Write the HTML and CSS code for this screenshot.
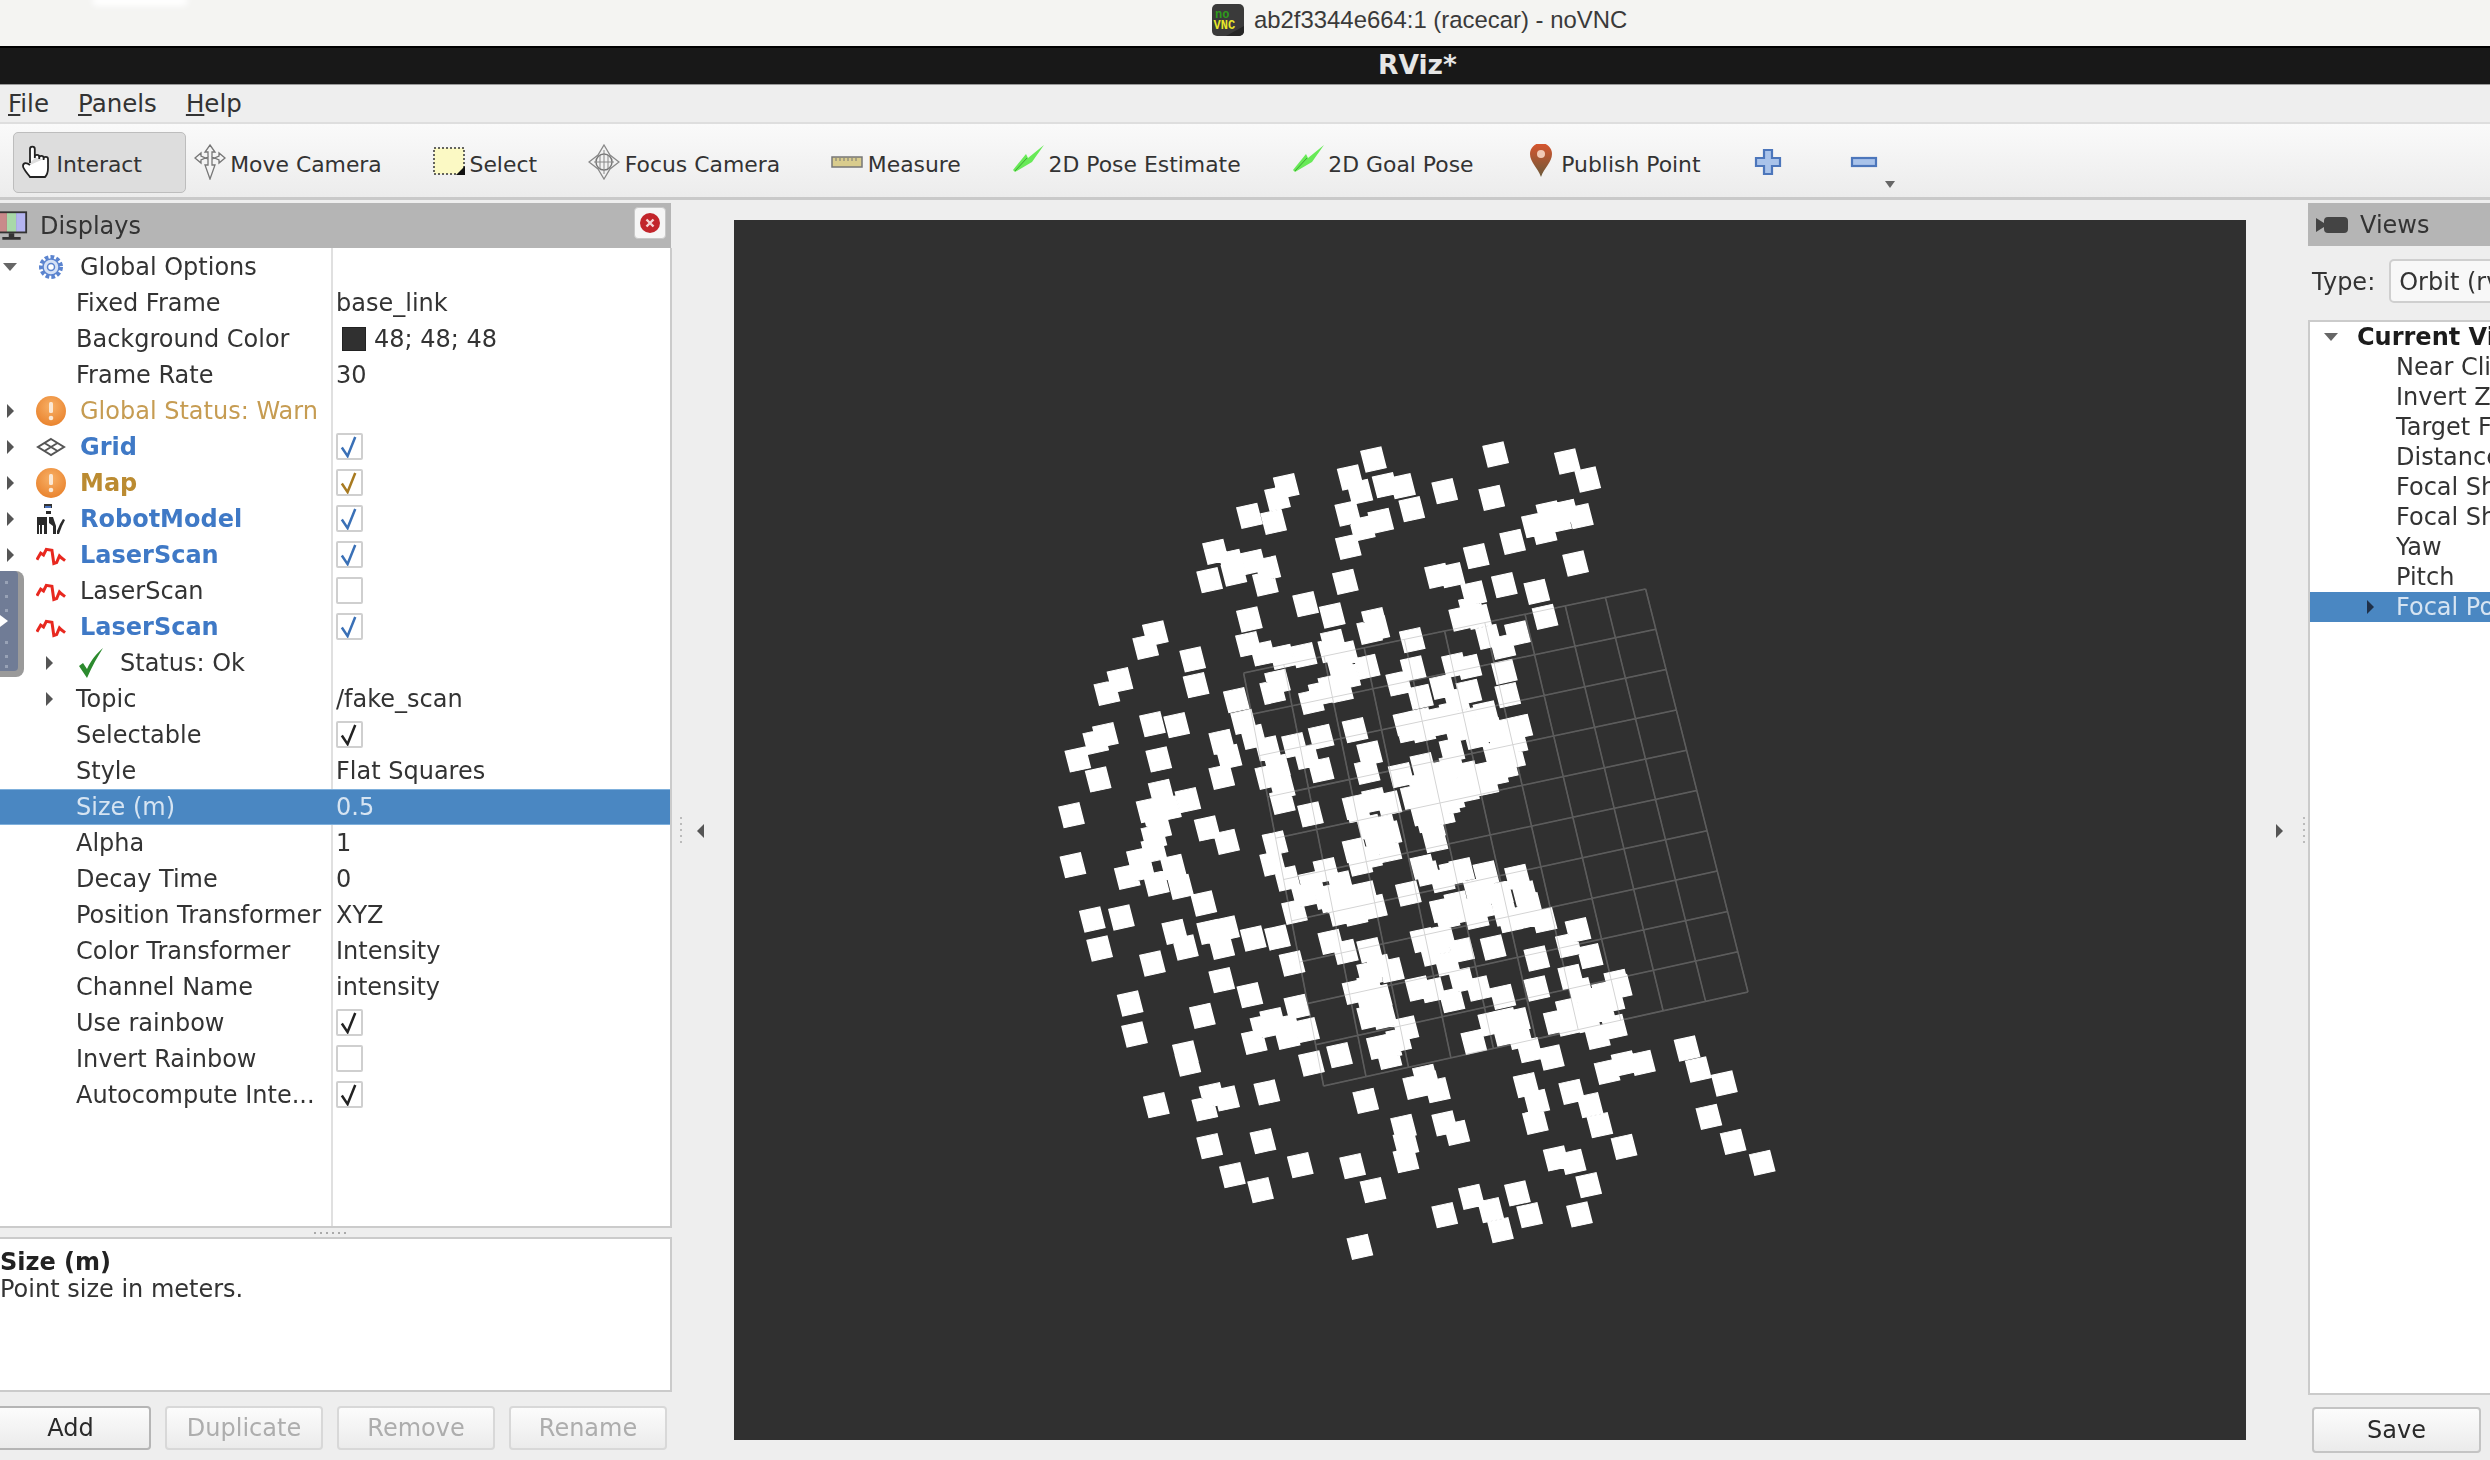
FILE: index.html
```html
<!DOCTYPE html>
<html lang="en">
<head>
<meta charset="utf-8">
<title>ab2f3344e664:1 (racecar) - noVNC</title>
<link rel="stylesheet" href="styles.css">
</head>
<body>
<div class="app">
  <header class="browserbar">
    <svg class="vncicon" viewBox="0 0 32 32"><rect width="32" height="32" rx="5" fill="#3a3a3a"/><path d="M32 22v5a5 5 0 0 1-5 5H14z" fill="#262626"/><text x="3" y="14" class="vnc-no">no</text><text x="1.5" y="25" class="vnc-vnc">VNC</text></svg>
    <span>ab2f3344e664:1 (racecar) - noVNC</span>
  </header>
  <div class="wintitle"><span>RViz*</span></div>
  <nav class="menubar">
    <span><u>F</u>ile</span><span><u>P</u>anels</span><span><u>H</u>elp</span>
  </nav>
  <div class="toolbar">
    <div class="tool pressed">
      <svg class="tic" viewBox="0 0 32 36"><path d="M10 19V5a2.4 2.4 0 0 1 4.800 0v9m0-1a2.200 2.200 0 0 1 4.400 0v2m0-1a2.200 2.200 0 0 1 4.400 0v2m0-1a2.200 2.200 0 0 1 4.400 0v9c0 4-1 7-3 9H10c-2-3-7-8-7-11 0-3 3-4 7-1" fill="#fff" stroke="#222" stroke-width="1.800"/></svg>
      <span>Interact</span>
    </div>
    <div class="tool">
      <svg class="tic" viewBox="0 0 32 36"><path d="M16 1l5 7h-3v7l7-3v-3l6 5-6 5v-3l-7-3v8h3l-5 14-5-14h3v-8l-7 3v3l-6-5 6-5v3l7 3V8h-3z" fill="#f4f4f4" stroke="#777" stroke-width="1.300"/></svg>
      <span>Move Camera</span>
    </div>
    <div class="tool">
      <svg class="tic" viewBox="0 0 32 36"><rect x="1" y="4" width="30" height="26" fill="#fbf9c4" stroke="#333" stroke-width="1.500" stroke-dasharray="2 2"/><path d="M32 22v9H23z" fill="#111"/></svg>
      <span>Select</span>
    </div>
    <div class="tool">
      <svg class="tic" viewBox="0 0 32 36"><path d="M16 1l6 10 9 7-9 7-6 10-6-10-9-7 9-7z" fill="#f2f2f2" stroke="#888" stroke-width="1.300"/><circle cx="16" cy="18" r="8" fill="none" stroke="#777" stroke-width="1.500"/><path d="M16 6v24M6 18h20M12 11v14M20 11v14" stroke="#888"/></svg>
      <span>Focus Camera</span>
    </div>
    <div class="tool">
      <svg class="tic" viewBox="0 0 32 36"><rect x="1" y="13" width="30" height="10" fill="#d9cc8d" stroke="#777" stroke-width="1.500"/><path d="M5 14v3M9 14v3M13 14v3M17 14v3M21 14v3M25 14v3" stroke="#777"/></svg>
      <span>Measure</span>
    </div>
    <div class="tool">
      <svg class="tic" viewBox="0 0 32 36"><path d="M32 1L20 18 3 28l-2-2 13-16 2 4z" fill="#68ea57"/><path d="M3 27l12-13" stroke="#3fa535" stroke-width="1"/></svg>
      <span>2D Pose Estimate</span>
    </div>
    <div class="tool">
      <svg class="tic" viewBox="0 0 32 36"><path d="M32 1L20 18 3 28l-2-2 13-16 2 4z" fill="#68ea57"/><path d="M3 27l12-13" stroke="#3fa535" stroke-width="1"/></svg>
      <span>2D Goal Pose</span>
    </div>
    <div class="tool">
      <svg class="tic" viewBox="0 0 32 36"><defs><linearGradient id="pin" x1="0" y1="0" x2="0" y2="1"><stop offset="0" stop-color="#d9552e"/><stop offset="1" stop-color="#6b5a3a"/></linearGradient></defs><path d="M16 33C13 24 5 18 5 10a11 11 0 0 1 22 0c0 8-8 14-11 23z" fill="url(#pin)"/><circle cx="16" cy="10" r="4" fill="#f1c9b5"/></svg>
      <span>Publish Point</span>
    </div>
    <div class="tool icononly">
      <svg class="tic" viewBox="0 0 32 36"><path d="M12 6h8v8h8v8h-8v8h-8v-8H4v-8h8z" fill="#a9c3ea" stroke="#4c76bb" stroke-width="2.200"/></svg>
    </div>
    <div class="tool icononly last">
      <svg class="tic" viewBox="0 0 32 36"><rect x="4" y="14" width="24" height="8" fill="#a9c3ea" stroke="#4c76bb" stroke-width="2.200"/></svg>
    </div>
    <i class="more"></i>
  </div>

  <main class="main">
    <section class="leftpanel">
      <div class="dockhead">
        <svg class="monitor" viewBox="0 0 36 34"><rect x="1" y="1" width="34" height="24" fill="#333"/><rect x="3" y="3" width="10" height="20" fill="#c98a8a"/><rect x="13" y="3" width="10" height="20" fill="#a8d8a8"/><rect x="23" y="3" width="10" height="20" fill="#b4b4f0"/><path d="M15 25h6v4h-6zM8 29h20v3H8z" fill="#333"/></svg>
        <span>Displays</span>
        <button class="closebtn"><svg viewBox="0 0 20 20"><circle cx="10" cy="10" r="10" fill="#c2252b"/><path d="M6.500 6.500l7 7m0-7l-7 7" stroke="#f6d6d6" stroke-width="2.400"/></svg></button>
      </div>
      <div class="tree">
        <div class="row"><div class="name"><i class="arrow down"></i><svg class="ic" viewBox="0 0 30 30"><circle cx="15" cy="15" r="9.500" fill="none" stroke="#5b84cf" stroke-width="5" stroke-dasharray="3.500 2"/><circle cx="15" cy="15" r="8" fill="#d6e2f6" stroke="#5b84cf" stroke-width="1.500"/><circle cx="15" cy="15" r="3.500" fill="#fff" stroke="#5b84cf" stroke-width="1.500"/></svg><b class="lbl">Global Options</b></div><div class="val"></div></div>
        <div class="row"><div class="name child">Fixed Frame</div><div class="val">base_link</div></div>
        <div class="row"><div class="name child">Background Color</div><div class="val"><i class="swatch"></i>48; 48; 48</div></div>
        <div class="row"><div class="name child">Frame Rate</div><div class="val">30</div></div>
        <div class="row"><div class="name"><i class="arrow"></i><svg class="ic" viewBox="0 0 30 30"><use href="#warn"/></svg><b class="lbl warnreg">Global Status: Warn</b></div><div class="val"></div></div>
        <div class="row"><div class="name"><i class="arrow"></i><svg class="ic" viewBox="0 0 30 30"><path d="M15 7l13 8-13 8-13-8zM8.500 11l13 8M21.500 11l-13 8" fill="none" stroke="#555" stroke-width="2"/></svg><b class="lbl on">Grid</b></div><div class="val"><span class="cb"><svg viewBox="0 0 24 24"><path d="M4 13l6 9 8-20" class="ck-blue"/></svg></span></div></div>
        <div class="row"><div class="name"><i class="arrow"></i><svg class="ic" viewBox="0 0 30 30"><use href="#warn"/></svg><b class="lbl warn">Map</b></div><div class="val"><span class="cb"><svg viewBox="0 0 24 24"><path d="M4 13l6 9 8-20" class="ck-gold"/></svg></span></div></div>
        <div class="row"><div class="name"><i class="arrow"></i><svg class="ic" viewBox="0 0 30 30"><path d="M8 0h8v4H8z" fill="#333"/><path d="M9 2h6v2H9z" fill="#4a73c0"/><path d="M10 7h5v3h-5zM1 13h10v17H8v-9H6v9H4v-9H3v9H1zM13 13h4l3 9v8h-3v-8l-4-3zM21 27l3-7 3-5 2 1-3 6-3 8h-2z" fill="#2a2a2a"/></svg><b class="lbl on">RobotModel</b></div><div class="val"><span class="cb"><svg viewBox="0 0 24 24"><path d="M4 13l6 9 8-20" class="ck-blue"/></svg></span></div></div>
        <div class="row"><div class="name"><i class="arrow"></i><svg class="ic" viewBox="0 0 32 24"><use href="#scan"/></svg><b class="lbl on">LaserScan</b></div><div class="val"><span class="cb"><svg viewBox="0 0 24 24"><path d="M4 13l6 9 8-20" class="ck-blue"/></svg></span></div></div>
        <div class="row"><div class="name"><i class="arrow hidden"></i><svg class="ic" viewBox="0 0 32 24"><use href="#scan"/></svg><b class="lbl">LaserScan</b></div><div class="val"><span class="cb"></span></div></div>
        <div class="row"><div class="name"><i class="arrow"></i><svg class="ic" viewBox="0 0 32 24"><use href="#scan"/></svg><b class="lbl on">LaserScan</b></div><div class="val"><span class="cb"><svg viewBox="0 0 24 24"><path d="M4 13l6 9 8-20" class="ck-blue"/></svg></span></div></div>
        <div class="row"><div class="name lvl2"><i class="arrow"></i><svg class="okic" viewBox="0 0 26 32"><path d="M1 19l4-3 4 6C13 13 19 6 25 1 20 9 14 19 9 31z" fill="#2c8a2e"/></svg><span>Status: Ok</span></div><div class="val"></div></div>
        <div class="row"><div class="name lvl2"><i class="arrow"></i><span class="l2text">Topic</span></div><div class="val">/fake_scan</div></div>
        <div class="row"><div class="name child">Selectable</div><div class="val"><span class="cb"><svg viewBox="0 0 24 24"><path d="M4 13l6 9 8-20" class="ck-black"/></svg></span></div></div>
        <div class="row"><div class="name child">Style</div><div class="val">Flat Squares</div></div>
        <div class="row sel"><div class="name child">Size (m)</div><div class="val">0.5</div></div>
        <div class="row"><div class="name child">Alpha</div><div class="val">1</div></div>
        <div class="row"><div class="name child">Decay Time</div><div class="val">0</div></div>
        <div class="row"><div class="name child">Position Transformer</div><div class="val">XYZ</div></div>
        <div class="row"><div class="name child">Color Transformer</div><div class="val">Intensity</div></div>
        <div class="row"><div class="name child">Channel Name</div><div class="val">intensity</div></div>
        <div class="row"><div class="name child">Use rainbow</div><div class="val"><span class="cb"><svg viewBox="0 0 24 24"><path d="M4 13l6 9 8-20" class="ck-black"/></svg></span></div></div>
        <div class="row"><div class="name child">Invert Rainbow</div><div class="val"><span class="cb"></span></div></div>
        <div class="row"><div class="name child">Autocompute Inte...</div><div class="val"><span class="cb"><svg viewBox="0 0 24 24"><path d="M4 13l6 9 8-20" class="ck-black"/></svg></span></div></div>
      </div>
      <div class="hsplit"><i></i></div>
      <div class="desc"><b>Size (m)</b><span>Point size in meters.</span></div>
      <div class="btnrow">
        <button class="btn first">Add</button>
        <button class="btn off">Duplicate</button>
        <button class="btn off">Remove</button>
        <button class="btn off">Rename</button>
      </div>
    </section>

    <div class="vsplit"><i class="tri-left"></i><i class="dots"></i></div>

    <div class="viewport">
      <svg class="scene" viewBox="734 220 1512 1220">
        <defs>
          <g id="gridlines">
            <path d="M1243.600 673L1645.600 589M1251.600 714.300L1655.800 629.300M1259.600 755.600L1666.100 669.600M1267.600 796.900L1676.300 709.900M1275.600 838.200L1686.600 750.200M1283.600 879.500L1696.800 790.500M1291.600 920.800L1707 830.800M1299.600 962.100L1717.300 871.100M1307.600 1003.400L1727.500 911.400M1315.600 1044.700L1737.800 951.700M1323.600 1086L1748 992M1243.600 673L1323.600 1086M1283.800 664.600L1366 1076.600M1324 656.200L1408.500 1067.200M1364.200 647.800L1450.900 1057.800M1404.400 639.400L1493.400 1048.400M1444.600 631L1535.800 1039M1484.800 622.600L1578.200 1029.600M1525 614.200L1620.700 1020.200M1565.200 605.800L1663.100 1010.800M1605.400 597.400L1705.600 1001.400M1645.600 589L1748 992"/>
          </g>
        </defs>
        <use href="#gridlines" class="grid-under"/>
        <g transform="translate(1040 420) scale(.4847 .3333) translate(-26 -24)">
          <path class="pts" d="M688 118l41-13 11 62-41 13zM940 103l41-13 11 62-41 13zM1088 124l41-13 11 62-41 13zM1130 178l41-13 11 62-41 13zM508 198l41-13 11 62-41 13zM490 235l41-13 11 62-41 13zM432 287l41-13 11 62-41 13zM482 305l41-13 11 62-41 13zM640 172l41-13 11 62-41 13zM660 215l41-13 11 62-41 13zM712 195l41-13 11 62-41 13zM748 198l41-13 11 62-41 13zM835 213l41-13 11 62-41 13zM932 233l41-13 11 62-41 13zM767 267l41-13 11 62-41 13zM635 280l41-13 11 62-41 13zM665 325l41-13 11 62-41 13zM703 302l41-13 11 62-41 13zM636 380l41-13 11 62-41 13zM1020 315l41-13 11 62-41 13zM1040 335l41-13 11 62-41 13zM1050 280l41-13 11 62-41 13zM1085 275l41-13 11 62-41 13zM1115 288l41-13 11 62-41 13zM1070 300l41-13 11 62-41 13zM975 365l41-13 11 62-41 13zM900 408l41-13 11 62-41 13zM1105 430l41-13 11 62-41 13zM362 395l41-13 11 62-41 13zM395 425l41-13 11 62-41 13zM400 460l41-13 11 62-41 13zM440 425l41-13 11 62-41 13zM470 445l41-13 11 62-41 13zM465 490l41-13 11 62-41 13zM350 480l41-13 11 62-41 13zM630 485l41-13 11 62-41 13zM820 467l41-13 11 62-41 13zM850 465l41-13 11 62-41 13zM958 495l41-13 11 62-41 13zM1025 515l41-13 11 62-41 13zM1042 590l41-13 11 62-41 13zM548 552l41-13 11 62-41 13zM603 586l41-13 11 62-41 13zM432 598l41-13 11 62-41 13zM690 600l41-13 11 62-41 13zM695 625l41-13 11 62-41 13zM680 635l41-13 11 62-41 13zM895 520l41-13 11 62-41 13zM890 565l41-13 11 62-41 13zM870 595l41-13 11 62-41 13zM905 590l41-13 11 62-41 13zM238 640l41-13 11 62-41 13zM218 680l41-13 11 62-41 13zM315 718l41-13 11 62-41 13zM322 795l41-13 11 62-41 13zM165 780l41-13 11 62-41 13zM138 818l41-13 11 62-41 13zM768 660l41-13 11 62-41 13zM925 650l41-13 11 62-41 13zM955 680l41-13 11 62-41 13zM985 640l41-13 11 62-41 13zM430 672l41-13 11 62-41 13zM460 700l41-13 11 62-41 13zM500 710l41-13 11 62-41 13zM545 705l41-13 11 62-41 13zM605 665l41-13 11 62-41 13zM630 700l41-13 11 62-41 13zM675 740l41-13 11 62-41 13zM620 750l41-13 11 62-41 13zM770 745l41-13 11 62-41 13zM740 790l41-13 11 62-41 13zM785 830l41-13 11 62-41 13zM855 735l41-13 11 62-41 13zM885 740l41-13 11 62-41 13zM830 800l41-13 11 62-41 13zM885 815l41-13 11 62-41 13zM860 840l41-13 11 62-41 13zM958 755l41-13 11 62-41 13zM965 825l41-13 11 62-41 13zM490 785l41-13 11 62-41 13zM480 815l41-13 11 62-41 13zM600 800l41-13 11 62-41 13zM560 845l41-13 11 62-41 13zM620 810l41-13 11 62-41 13zM405 840l41-13 11 62-41 13zM420 905l41-13 11 62-41 13zM440 950l41-13 11 62-41 13zM232 912l41-13 11 62-41 13zM282 915l41-13 11 62-41 13zM135 945l41-13 11 62-41 13zM115 965l41-13 11 62-41 13zM78 1018l41-13 11 62-41 13zM245 1018l41-13 11 62-41 13zM120 1078l41-13 11 62-41 13zM375 965l41-13 11 62-41 13zM390 1010l41-13 11 62-41 13zM375 1070l41-13 11 62-41 13zM470 985l41-13 11 62-41 13zM525 975l41-13 11 62-41 13zM580 950l41-13 11 62-41 13zM550 1010l41-13 11 62-41 13zM580 1050l41-13 11 62-41 13zM650 930l41-13 11 62-41 13zM490 1040l41-13 11 62-41 13zM470 1070l41-13 11 62-41 13zM500 1100l41-13 11 62-41 13zM500 1145l41-13 11 62-41 13zM680 1000l41-13 11 62-41 13zM675 1055l41-13 11 62-41 13zM755 910l41-13 11 62-41 13zM790 930l41-13 11 62-41 13zM830 910l41-13 11 62-41 13zM880 900l41-13 11 62-41 13zM920 880l41-13 11 62-41 13zM960 930l41-13 11 62-41 13zM980 965l41-13 11 62-41 13zM900 950l41-13 11 62-41 13zM940 1000l41-13 11 62-41 13zM960 1040l41-13 11 62-41 13zM920 1060l41-13 11 62-41 13zM880 1060l41-13 11 62-41 13zM850 1040l41-13 11 62-41 13zM840 1085l41-13 11 62-41 13zM900 1090l41-13 11 62-41 13zM745 1065l41-13 11 62-41 13zM790 1035l41-13 11 62-41 13zM785 1095l41-13 11 62-41 13zM800 1150l41-13 11 62-41 13zM850 1135l41-13 11 62-41 13zM810 1220l41-13 11 62-41 13zM250 1115l41-13 11 62-41 13zM305 1140l41-13 11 62-41 13zM235 1180l41-13 11 62-41 13zM265 1165l41-13 11 62-41 13zM235 1250l41-13 11 62-41 13zM345 1225l41-13 11 62-41 13zM385 1265l41-13 11 62-41 13zM65 1185l41-13 11 62-41 13zM558 1183l41-13 11 62-41 13zM655 1170l41-13 11 62-41 13zM690 1140l41-13 11 62-41 13zM720 1150l41-13 11 62-41 13zM710 1220l41-13 11 62-41 13zM695 1270l41-13 11 62-41 13zM650 1290l41-13 11 62-41 13zM680 1310l41-13 11 62-41 13zM720 1290l41-13 11 62-41 13zM485 1270l41-13 11 62-41 13zM785 900l41-13 11 62-41 13zM850 880l41-13 11 62-41 13zM930 930l41-13 11 62-41 13zM990 920l41-13 11 62-41 13zM940 1060l41-13 11 62-41 13zM920 1090l41-13 11 62-41 13zM880 1110l41-13 11 62-41 13zM820 1060l41-13 11 62-41 13zM840 1150l41-13 11 62-41 13zM800 1200l41-13 11 62-41 13zM815 1260l41-13 11 62-41 13zM225 1170l41-13 11 62-41 13zM245 1220l41-13 11 62-41 13zM235 1290l41-13 11 62-41 13zM205 1320l41-13 11 62-41 13zM650 1160l41-13 11 62-41 13zM680 1220l41-13 11 62-41 13zM720 1240l41-13 11 62-41 13zM600 690l41-13 11 62-41 13zM620 720l41-13 11 62-41 13zM635 770l41-13 11 62-41 13zM580 820l41-13 11 62-41 13zM760 930l41-13 11 62-41 13zM810 900l41-13 11 62-41 13zM860 930l41-13 11 62-41 13zM850 990l41-13 11 62-41 13zM975 1010l41-13 11 62-41 13zM950 960l41-13 11 62-41 13zM810 1110l41-13 11 62-41 13zM770 1130l41-13 11 62-41 13zM790 1180l41-13 11 62-41 13zM830 1180l41-13 11 62-41 13z"/>
        </g>
        <g transform="translate(1040 860) scale(.4847 .3333) translate(-26 -24)">
          <path class="pts" d="M68 15l41-13 11 62-41 13zM180 50l41-13 11 62-41 13zM210 25l41-13 11 62-41 13zM240 70l41-13 11 62-41 13zM275 20l41-13 11 62-41 13zM290 80l41-13 11 62-41 13zM338 130l41-13 11 62-41 13zM108 178l41-13 11 62-41 13zM168 172l41-13 11 62-41 13zM123 265l41-13 11 62-41 13zM232 310l41-13 11 62-41 13zM278 215l41-13 11 62-41 13zM300 262l41-13 11 62-41 13zM350 215l41-13 11 62-41 13zM385 205l41-13 11 62-41 13zM375 260l41-13 11 62-41 13zM440 235l41-13 11 62-41 13zM490 232l41-13 11 62-41 13zM480 10l41-13 11 62-41 13zM510 55l41-13 11 62-41 13zM525 155l41-13 11 62-41 13zM560 70l41-13 11 62-41 13zM590 30l41-13 11 62-41 13zM545 105l41-13 11 62-41 13zM620 70l41-13 11 62-41 13zM650 110l41-13 11 62-41 13zM690 140l41-13 11 62-41 13zM620 160l41-13 11 62-41 13zM670 100l41-13 11 62-41 13zM600 245l41-13 11 62-41 13zM630 275l41-13 11 62-41 13zM680 270l41-13 11 62-41 13zM700 320l41-13 11 62-41 13zM725 330l41-13 11 62-41 13zM520 310l41-13 11 62-41 13zM375 360l41-13 11 62-41 13zM433 405l41-13 11 62-41 13zM335 467l41-13 11 62-41 13zM186 430l41-13 11 62-41 13zM195 523l41-13 11 62-41 13zM300 580l41-13 11 62-41 13zM305 610l41-13 11 62-41 13zM760 100l41-13 11 62-41 13zM790 20l41-13 11 62-41 13zM830 60l41-13 11 62-41 13zM870 30l41-13 11 62-41 13zM830 150l41-13 11 62-41 13zM860 130l41-13 11 62-41 13zM910 140l41-13 11 62-41 13zM920 40l41-13 11 62-41 13zM985 50l41-13 11 62-41 13zM950 100l41-13 11 62-41 13zM970 180l41-13 11 62-41 13zM1010 135l41-13 11 62-41 13zM1040 180l41-13 11 62-41 13zM1000 170l41-13 11 62-41 13zM660 10l41-13 11 62-41 13zM790 240l41-13 11 62-41 13zM830 230l41-13 11 62-41 13zM810 280l41-13 11 62-41 13zM870 270l41-13 11 62-41 13zM840 310l41-13 11 62-41 13zM935 262l41-13 11 62-41 13zM1025 295l41-13 11 62-41 13zM1110 210l41-13 11 62-41 13zM1090 255l41-13 11 62-41 13zM1135 288l41-13 11 62-41 13zM650 395l41-13 11 62-41 13zM680 430l41-13 11 62-41 13zM710 470l41-13 11 62-41 13zM700 410l41-13 11 62-41 13zM780 385l41-13 11 62-41 13zM810 390l41-13 11 62-41 13zM850 420l41-13 11 62-41 13zM870 360l41-13 11 62-41 13zM905 385l41-13 11 62-41 13zM955 410l41-13 11 62-41 13zM1025 385l41-13 11 62-41 13zM1095 350l41-13 11 62-41 13zM1115 390l41-13 11 62-41 13zM1190 365l41-13 11 62-41 13zM1165 400l41-13 11 62-41 13zM1160 450l41-13 11 62-41 13zM1090 450l41-13 11 62-41 13zM1065 485l41-13 11 62-41 13zM1150 530l41-13 11 62-41 13zM1185 500l41-13 11 62-41 13zM530 440l41-13 11 62-41 13zM480 480l41-13 11 62-41 13zM460 500l41-13 11 62-41 13zM442 545l41-13 11 62-41 13zM510 530l41-13 11 62-41 13zM550 510l41-13 11 62-41 13zM560 610l41-13 11 62-41 13zM618 585l41-13 11 62-41 13zM700 560l41-13 11 62-41 13zM720 590l41-13 11 62-41 13zM740 540l41-13 11 62-41 13zM755 505l41-13 11 62-41 13zM895 545l41-13 11 62-41 13zM930 490l41-13 11 62-41 13zM960 520l41-13 11 62-41 13zM985 480l41-13 11 62-41 13zM1010 570l41-13 11 62-41 13zM1055 592l41-13 11 62-41 13zM795 650l41-13 11 62-41 13zM775 680l41-13 11 62-41 13zM820 690l41-13 11 62-41 13zM1170 635l41-13 11 62-41 13zM1205 610l41-13 11 62-41 13zM1243 608l41-13 11 62-41 13zM1335 565l41-13 11 62-41 13zM1358 628l41-13 11 62-41 13zM1412 670l41-13 11 62-41 13zM240 735l41-13 11 62-41 13zM340 745l41-13 11 62-41 13zM355 705l41-13 11 62-41 13zM385 715l41-13 11 62-41 13zM468 697l41-13 11 62-41 13zM672 722l41-13 11 62-41 13zM1003 675l41-13 11 62-41 13zM1025 725l41-13 11 62-41 13zM1022 785l41-13 11 62-41 13zM1097 695l41-13 11 62-41 13zM1135 735l41-13 11 62-41 13zM1155 795l41-13 11 62-41 13zM750 800l41-13 11 62-41 13zM755 850l41-13 11 62-41 13zM755 900l41-13 11 62-41 13zM835 790l41-13 11 62-41 13zM860 818l41-13 11 62-41 13zM1205 860l41-13 11 62-41 13zM1380 770l41-13 11 62-41 13zM1430 845l41-13 11 62-41 13zM1490 908l41-13 11 62-41 13zM350 858l41-13 11 62-41 13zM460 843l41-13 11 62-41 13zM397 945l41-13 11 62-41 13zM537 915l41-13 11 62-41 13zM645 918l41-13 11 62-41 13zM687 990l41-13 11 62-41 13zM455 990l41-13 11 62-41 13zM1065 895l41-13 11 62-41 13zM1100 905l41-13 11 62-41 13zM1132 975l41-13 11 62-41 13zM1113 1063l41-13 11 62-41 13zM835 1065l41-13 11 62-41 13zM890 1010l41-13 11 62-41 13zM930 1050l41-13 11 62-41 13zM950 1110l41-13 11 62-41 13zM985 1000l41-13 11 62-41 13zM1010 1065l41-13 11 62-41 13zM660 1160l41-13 11 62-41 13zM650 160l41-13 11 62-41 13zM610 120l41-13 11 62-41 13zM590 110l41-13 11 62-41 13zM900 90l41-13 11 62-41 13zM880 150l41-13 11 62-41 13zM960 160l41-13 11 62-41 13zM820 250l41-13 11 62-41 13zM680 340l41-13 11 62-41 13zM1130 420l41-13 11 62-41 13zM1180 420l41-13 11 62-41 13zM1090 490l41-13 11 62-41 13zM960 480l41-13 11 62-41 13zM680 380l41-13 11 62-41 13zM720 560l41-13 11 62-41 13zM510 500l41-13 11 62-41 13zM1195 380l41-13 11 62-41 13zM800 670l41-13 11 62-41 13zM640 130l41-13 11 62-41 13zM600 120l41-13 11 62-41 13zM920 100l41-13 11 62-41 13zM1000 100l41-13 11 62-41 13zM900 170l41-13 11 62-41 13zM800 40l41-13 11 62-41 13zM850 40l41-13 11 62-41 13zM840 170l41-13 11 62-41 13zM1130 480l41-13 11 62-41 13zM990 530l41-13 11 62-41 13zM680 470l41-13 11 62-41 13z"/>
        </g>
        <use href="#gridlines" class="grid-over"/>
      </svg>
    </div>

    <div class="vsplit right"><i class="tri-right"></i><i class="dots"></i></div>

    <section class="rightpanel">
      <div class="viewshead">
        <svg class="camic" viewBox="0 0 32 16"><path d="M0 1l8 5V4a4 4 0 0 1 4-4h16a4 4 0 0 1 4 4v8a4 4 0 0 1-4 4H12a4 4 0 0 1-4-4v-2l-8 5z" fill="#444"/></svg>
        <span>Views</span>
      </div>
      <div class="typerow"><span class="typelabel">Type:</span><div class="combo"><span class="typelabel">Orbit (rviz)</span></div></div>
      <div class="vtree">
        <div class="vrow"><i class="arrow down"></i><b>Current View</b></div>
        <div class="vrow kid">Near Clip</div>
        <div class="vrow kid">Invert Z Axis</div>
        <div class="vrow kid">Target Frame</div>
        <div class="vrow kid">Distance</div>
        <div class="vrow kid">Focal Shape Size</div>
        <div class="vrow kid">Focal Shape Fixed Size</div>
        <div class="vrow kid">Yaw</div>
        <div class="vrow kid">Pitch</div>
        <div class="vrow sel"><i class="arrow dark"></i><span>Focal Point</span></div>
      </div>
      <button class="btn save">Save</button>
    </section>
  </main>

  <svg class="defs" width="0" height="0">
    <defs>
      <radialGradient id="og" cx=".5" cy=".35" r=".7"><stop offset="0" stop-color="#f8b066"/><stop offset="1" stop-color="#e8802a"/></radialGradient>
      <g id="warn"><ellipse cx="15" cy="15" rx="15" ry="15" fill="url(#og)"/><rect x="13" y="6" width="4" height="11" rx="1.500" fill="#fbe8d4"/><circle cx="15" cy="22" r="2.300" fill="#fbe8d4"/></g>
      <path id="scan" d="M1 17l4-7 3 2 3-6 6 1 2 14 3-1 3-7 2 2 4 3" fill="none" stroke="#e8281f" stroke-width="3.200"/>
    </defs>
  </svg>

  <div class="vnchandle">
    <svg viewBox="0 0 24 106"><path d="M0 0h14a4 4 0 0 1 4 4v92a4 4 0 0 1-4 4H0z" fill="#707c96"/><path d="M5 10h3v3H5zM5 24h3v3H5zM5 38h3v3H5zM5 70h3v3H5zM5 84h3v3H5zM5 94h3v3H5z" fill="#98a2b6"/><path d="M0 44l8 6-8 6z" fill="#fff"/></svg>
  </div>
  <div class="smudge"></div>
</div>
</body>
</html>
```
FILE: styles.css
```css
* { box-sizing: border-box; }
html, body { margin: 0; padding: 0; }
body { width: 2490px; height: 1460px; overflow: hidden; background: #eeeeee; }
.app {
  position: relative;
  width: 2490px;
  height: 1460px;
  overflow: hidden;
  font-family: "DejaVu Sans", sans-serif;
  font-size: 24px;
  color: #333;
  filter: blur(.5px);
}
.defs { position: absolute; }

.browserbar {
  height: 46px;
  background: #f4f4f2;
  display: flex;
  align-items: center;
  padding-left: 1212px;
  gap: 10px;
  font-family: "Liberation Sans", sans-serif;
  font-size: 23.9px;
  color: #3a3a3a;
}
.vncicon { width: 32px; height: 32px; margin-top: -6px; }
.browserbar span { margin-top: -7px; }
.vnc-no { font: bold 12px "Liberation Mono", monospace; fill: #2f9a1a; }
.vnc-vnc { font: bold 12px "Liberation Mono", monospace; fill: #e8e82a; }
.smudge { position: absolute; left: 92px; top: -4px; width: 96px; height: 10px; background: #fff; border-radius: 6px; filter: blur(3px); }

.wintitle {
  height: 39px;
  background: #181818;
  border-top: 2px solid #000;
  border-bottom: 1px solid #999;
  display: flex;
  align-items: center;
  padding: 0 0 3px 1378px;
  font-weight: bold;
  font-size: 26.5px;
  color: #e6e6e6;
}

.menubar {
  height: 39px;
  background: #eeeeee;
  border-bottom: 2px solid #dedede;
  display: flex;
  align-items: center;
  gap: 29px;
  padding-left: 8px;
  font-size: 24.5px;
}

.toolbar {
  height: 76px;
  background: linear-gradient(#fafafa, #ececec);
  border-bottom: 3px solid #c9c9c9;
  display: flex;
  align-items: center;
  padding: 3px 0 0 14px;
  font-size: 21.9px;
}
.tool {
  height: 61px;
  display: flex;
  align-items: center;
  gap: 4.5px;
  padding: 0 42.2px 0 6px;
  margin-right: 2px;
  border: 1px solid transparent;
  margin-left: -1px;
  white-space: nowrap;
}
.tool span { margin-top: 5px; }
.tool.pressed { background: #dddddd; border-color: #bdbdbd; border-radius: 5px; padding-right: 42.8px; }
.tic { width: 32px; height: 36px; flex: none; }
.tool.icononly { padding-right: 55px; }
.tool.icononly.last { padding-right: 4px; margin-right: 0; }
.more {
  align-self: flex-end;
  margin-bottom: 9px;
  border-left: 5px solid transparent;
  border-right: 5px solid transparent;
  border-top: 7px solid #666;
}

.main { display: flex; height: 1261px; }

.leftpanel { width: 672px; flex: none; display: flex; flex-direction: column; padding-top: 3px; }
.dockhead {
  height: 45px;
  background: #b5b5b5;
  display: flex;
  align-items: center;
  gap: 12px;
  margin-right: 1px;
  flex: none;
}
.monitor { width: 33px; height: 32px; margin-left: -5px; margin-top: 1px; flex: none; }
.closebtn {
  margin: -5px 5px 0 auto;
  width: 32px;
  height: 32px;
  padding: 5px;
  background: #f6f6f6;
  border: 1px solid #c8c8c8;
  border-radius: 4px;
  display: flex;
}
.closebtn svg { width: 20px; height: 20px; }

.tree {
  height: 980px;
  flex: none;
  padding-top: 1px;
  border-right: 2px solid #cbcbcb;
  border-bottom: 2px solid #cbcbcb;
  background: linear-gradient(#e0e0e0, #e0e0e0) 331px 0 / 2px 100% no-repeat, #ffffff;
}
.row { display: grid; grid-template-columns: 331px 1fr; height: 36px; align-items: center; white-space: nowrap; }
.name { display: flex; align-items: center; height: 100%; }
.name.child { padding-left: 76px; }
.name.lvl2 { padding-left: 39px; }
.val { padding-left: 5px; display: flex; align-items: center; height: 100%; }
.row.sel { background: #4a87c2; color: #d6e4f2; box-shadow: inset 0 1px #7fb0dc, inset 0 -1px #7fb0dc; }

.arrow { width: 20px; height: 20px; flex: none; display: flex; align-items: center; justify-content: center; }
.arrow::before {
  content: "";
  border-top: 7px solid transparent;
  border-bottom: 7px solid transparent;
  border-left: 7px solid #555;
}
.arrow.down::before {
  border-left: 7px solid transparent;
  border-right: 7px solid transparent;
  border-top: 8px solid #666;
  border-bottom: 0;
}
.arrow.hidden::before { display: none; }
.arrow.dark::before { border-left-color: #1f3048; }

.ic { width: 30px; height: 30px; margin-left: 16px; flex: none; }
.lbl { font-weight: normal; margin-left: 14px; }
.lbl.on { font-weight: bold; color: #3f79c6; }
.lbl.warn { font-weight: bold; color: #bb8b31; }
.lbl.warnreg { color: #c69c52; }
.okic { width: 26px; height: 32px; margin-left: 19px; flex: none; }
.lvl2 span { margin-left: 16px; }
.lvl2 .l2text { margin-left: 17px; }

.swatch { width: 24px; height: 24px; background: #303030; border: 1px solid #222; margin: 0 8px 0 6px; flex: none; }
.cb {
  width: 27px;
  height: 27px;
  margin-top: -2px;
  background: #fff;
  border: 2px solid #cfcfcf;
  border-radius: 2px;
  display: flex;
}
.cb svg { width: 23px; height: 23px; }
.cb path { fill: none; stroke-width: 2.6; }
.ck-blue { stroke: #3a70b6; }
.ck-gold { stroke: #a87a20; }
.ck-black { stroke: #222; }

.hsplit { height: 9px; flex: none; display: flex; justify-content: center; align-items: center; padding-right: 10px; }
.hsplit i { width: 34px; height: 2px; background: repeating-linear-gradient(90deg, #aaa 0 2px, transparent 2px 6px); }

.desc {
  height: 155px;
  flex: none;
  background: #fff;
  border: 2px solid #cbcbcb;
  border-left: 0;
  padding-top: 10px;
  display: flex;
  flex-direction: column;
  line-height: 27px;
}
.desc b { color: #222; }

.btnrow { display: flex; gap: 14px; margin-top: 14px; padding-right: 5px; }
.btn {
  flex: 1;
  height: 44px;
  font: inherit;
  color: #2a2a2a;
  background: linear-gradient(#fcfcfc, #ebebeb);
  border: 2px solid #cfcfcf;
  border-radius: 4px;
  padding: 0;
}
.btn.first { flex: 0 0 151px; padding-right: 8px; border-color: #b5b5b5; border-left: 0; border-radius: 0 4px 4px 0; }
.btn.off { color: #adadad; border-color: #d8d8d8; }

.vsplit { width: 62px; flex: none; display: flex; align-items: center; justify-content: center; position: relative; }
.tri-left { border-top: 7px solid transparent; border-bottom: 7px solid transparent; border-right: 7px solid #555; margin-right: 6px; }
.tri-right { border-top: 7px solid transparent; border-bottom: 7px solid transparent; border-left: 7px solid #555; margin-left: 4px; }
.dots { width: 2px; height: 28px; background: repeating-linear-gradient(#bbb 0 2px, transparent 2px 6px); }
.vsplit .dots { position: absolute; top: calc(50% - 14px); left: 8px; }
.vsplit.right .dots { left: 57px; }

.viewport { width: 1512px; height: 1220px; flex: none; margin-top: 20px; background: #303030; }
.scene { display: block; width: 100%; height: 100%; }
.pts { fill: #ffffff; stroke: #ffffff; stroke-width: 3; }
.grid-under { fill: none; stroke: #6c6c6c; stroke-width: 1.5; }
.grid-over { fill: none; stroke: #d4d4d4; stroke-width: 1; mix-blend-mode: multiply; }

.rightpanel { width: 182px; flex: none; overflow: hidden; padding-top: 3px; display: flex; flex-direction: column; white-space: nowrap; }
.viewshead { height: 43px; width: 400px; flex: none; background: #b5b5b5; display: flex; align-items: center; padding-left: 8px; gap: 12px; }
.camic { width: 32px; height: 16px; flex: none; }
.typerow { height: 44px; margin-top: 13px; display: flex; align-items: center; padding-left: 4px; gap: 14px; width: 400px; flex: none; }
.typelabel { padding-top: 2px; }
.combo { width: 300px; height: 44px; background: #f8f8f8; border: 2px solid #cfcfcf; border-radius: 5px; padding-left: 8px; display: flex; align-items: center; }
.vtree { width: 400px; height: 1075px; margin-top: 17px; flex: none; background: #fff; border: 2px solid #cbcbcb; }
.vrow { height: 30px; display: flex; align-items: center; padding-left: 11px; }
.vrow b { margin-left: 16px; color: #1c1c1c; }
.vrow.kid { padding-left: 86px; }
.vrow.sel { background: #4a87c2; color: #d6e4f2; padding-left: 50px; }
.vrow.sel span { margin-left: 16px; }
.btn.save { flex: none; width: 169px; height: 46px; margin: 12px 0 0 4px; border-color: #c4c4c4; }

.vnchandle { position: absolute; left: 0; top: 571px; width: 24px; height: 106px; background: #9a9a9a; border-radius: 0 8px 8px 0; }
.vnchandle svg { display: block; width: 100%; height: 100%; }
```
